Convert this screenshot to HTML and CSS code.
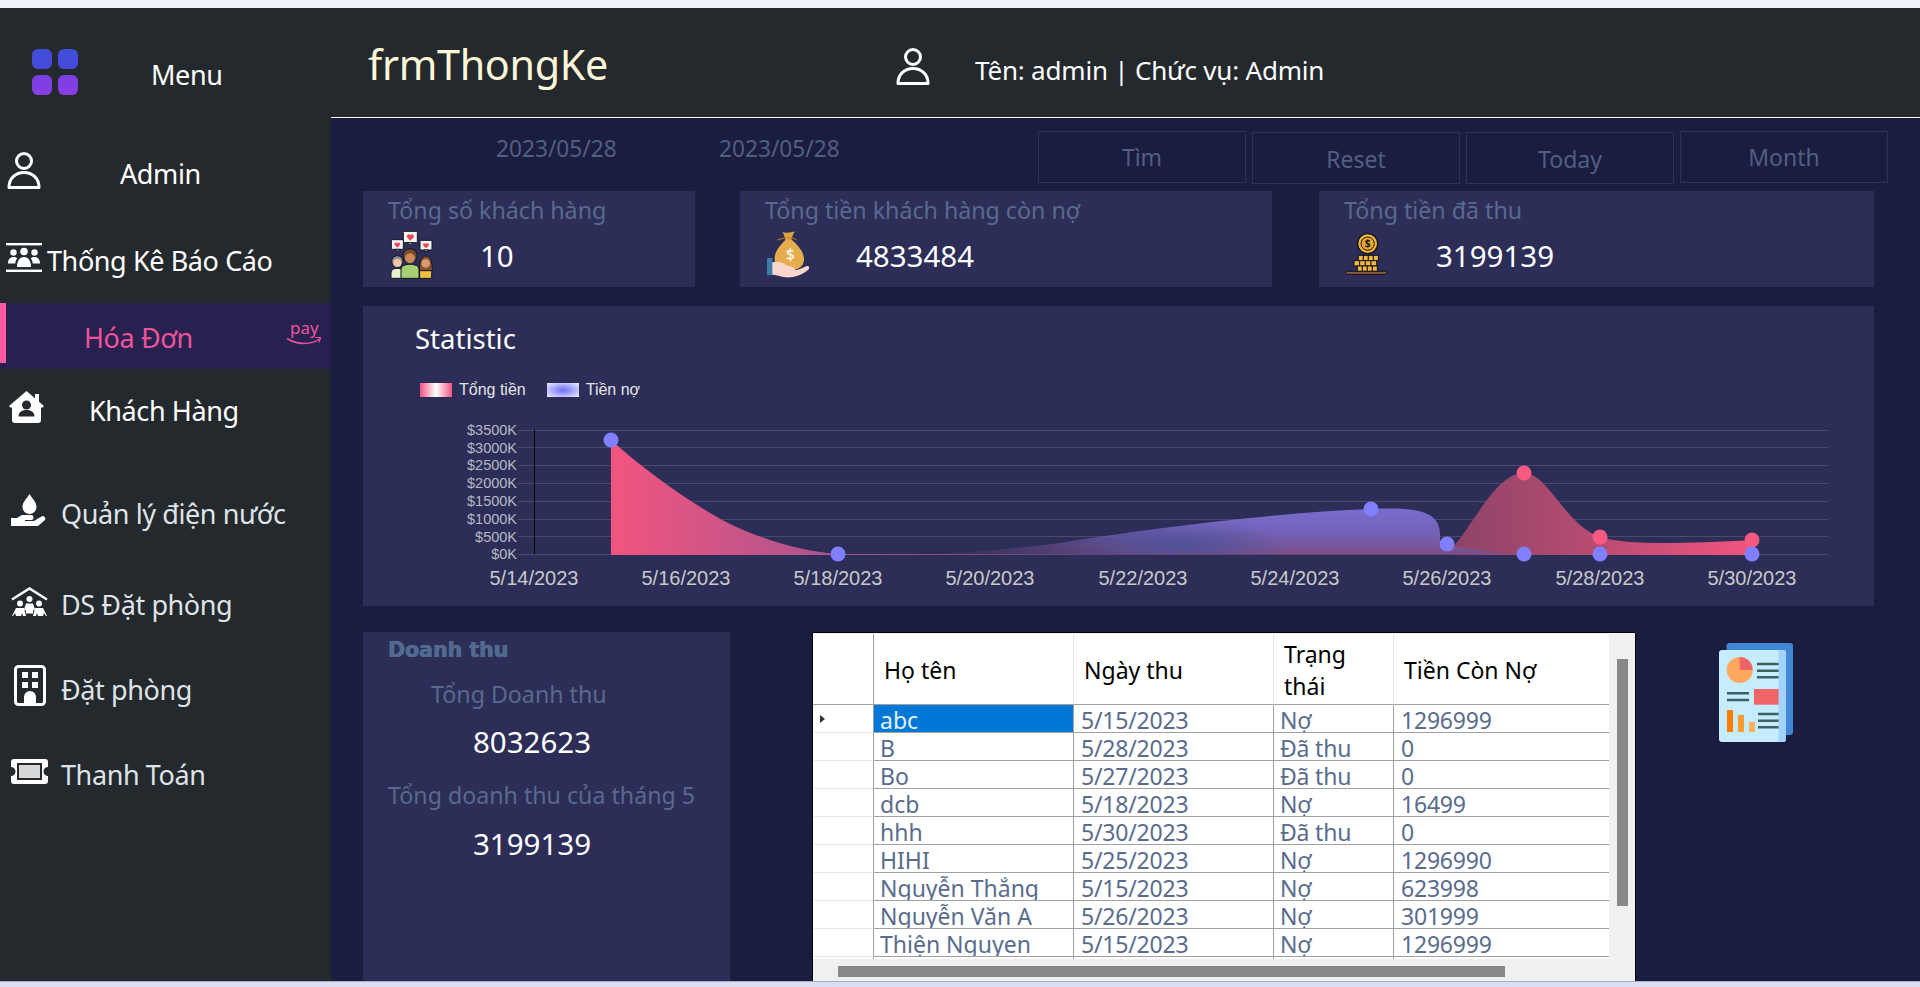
FILE: index.html
```html
<!DOCTYPE html>
<html lang="vi">
<head>
<meta charset="utf-8">
<title>frmThongKe</title>
<link rel="stylesheet" href="styles.css">
</head>
<body>
<div class="app">
  <div class="top-strip"></div>
  <div class="shell">
    <aside class="sidebar">
      <div class="side-row row-brand">
        <div class="logo"><i class="t1"></i><i class="t1"></i><i class="t2"></i><i class="t2"></i></div>
        <span class="label label-brand">Menu</span>
      </div>
      <div class="side-row row-admin">
        <svg class="ico-user" viewBox="0 0 34 37"><circle cx="17" cy="9" r="7.5" fill="none" stroke="#fff" stroke-width="3"/><path d="M2 35.5C2 26 9 20.5 17 20.5S32 26 32 35.5Z" fill="none" stroke="#fff" stroke-width="3" stroke-linejoin="round"/></svg>
        <span class="label label-admin">Admin</span>
      </div>
      <div class="side-row row-report">
        <svg class="ico-report" viewBox="0 0 36 29" fill="#fff"><rect width="36" height="2.400"/><rect y="26.600" width="36" height="2.400"/><circle cx="18" cy="8.500" r="3.800"/><circle cx="7.500" cy="9.500" r="3.200"/><circle cx="28.500" cy="9.500" r="3.200"/><path d="M2 20.500c0-4 2-6.500 5.500-6.500 1.800 0 2.800.5 3.700 1.400-1.400 1.500-1.900 3.200-1.900 5.100Z"/><path d="M34 20.500c0-4-2-6.500-5.500-6.500-1.800 0-2.800.5-3.700 1.400 1.400 1.500 1.900 3.200 1.900 5.100Z"/><path d="M11 24c0-6 2.500-10 7-10s7 4 7 10Z"/></svg>
        <span class="label label-report">Thống Kê Báo Cáo</span>
      </div>
      <div class="side-row row-active">
        <span class="active-bar"></span>
        <span class="label label-active">Hóa Đơn</span>
        <svg class="ico-pay" viewBox="0 0 34 24"><text x="3" y="12" class="pay-text">pay</text><path d="M0 16.500C10 23 24 23 32.500 17" fill="none" stroke="#f0529c" stroke-width="1.500"/><path d="M28 15.500l5.500 0-1.500 5" fill="none" stroke="#f0529c" stroke-width="1.200"/></svg>
      </div>
      <div class="side-row row-customer">
        <svg class="ico-house" viewBox="0 0 35 32"><path fill="#fff" d="M17.500 0L26 7.300V3h4v7.800L35 15l-2 2-1-.9V29a3 3 0 0 1-3 3H6a3 3 0 0 1-3-3V16l-1 1-2-2Z"/><circle cx="17.500" cy="14" r="4.500" fill="#24292d"/><path fill="#24292d" d="M9.500 25.500c0-4 3-6.500 8-6.500s8 2.500 8 6.500Z"/></svg>
        <span class="label label-customer">Khách Hàng</span>
      </div>
      <div class="side-row row-water">
        <svg class="ico-wide" viewBox="0 0 37 32" fill="#fff"><path d="M18.500 0c3 5 7 8 7 13a7 7 0 0 1-14 0c0-5 4-8 7-13Z"/><path d="M0 24h6l5-3h9a2.500 2.500 0 0 1 0 5h-6v1h9l7.500-4.500a2.600 2.600 0 0 1 3.500 3.600L27 32H0Z"/></svg>
        <span class="label label-sub">Quản lý điện nước</span>
      </div>
      <div class="side-row row-booklist">
        <svg class="ico-wide" viewBox="0 0 37 29" fill="#fff"><path d="M1 12.500L18.500 1.500 36 12.500" fill="none" stroke="#fff" stroke-width="2.500"/><circle cx="18.500" cy="12" r="3"/><circle cx="9" cy="16.500" r="3"/><circle cx="28" cy="16.500" r="3"/><path d="M15 16.500h7l2 6-2 1v3h-7v-3l-2-1Z"/><path d="M5 21h8l2 8h-3l-1-3-1 3H5l-1-3-2 3H1Z"/><path d="M24 21h8l4 8h-1l-2-3-1 3h-5l-1-3-1 3h-3Z"/></svg>
        <span class="label label-sub">DS Đặt phòng</span>
      </div>
      <div class="side-row row-booking">
        <svg class="ico-building" viewBox="0 0 32 41"><rect x="1.500" y="1.500" width="29" height="38" rx="3" fill="none" stroke="#fff" stroke-width="3"/><g fill="#fff"><rect x="8" y="7" width="6" height="6"/><rect x="18" y="7" width="6" height="6"/><rect x="8" y="17" width="6" height="6"/><rect x="18" y="17" width="6" height="6"/><path d="M10 39V32a6 6 0 0 1 12 0v7Z"/></g></svg>
        <span class="label label-sub label-building">Đặt phòng</span>
      </div>
      <div class="side-row row-pay">
        <svg class="ico-wide ico-ticket" viewBox="0 0 37 25"><path fill="#fff" d="M3 0H34a3 3 0 0 1 3 3V8a4.500 4.500 0 0 0 0 9V22a3 3 0 0 1-3 3H3a3 3 0 0 1-3-3V17a4.500 4.500 0 0 0 0-9V3a3 3 0 0 1 3-3Z"/><rect x="7" y="5" width="23" height="15" fill="#d8d8d8" stroke="#24292d" stroke-width="2"/></svg>
        <span class="label label-sub label-pay">Thanh Toán</span>
      </div>
    </aside>

    <main class="main">
      <header class="header">
        <h1 class="title">frmThongKe</h1>
        <svg class="ico-user ico-user-head" viewBox="0 0 34 37"><circle cx="17" cy="9" r="7.500" fill="none" stroke="#fff" stroke-width="3"/><path d="M2 35.500C2 26 9 20.500 17 20.500S32 26 32 35.500Z" fill="none" stroke="#fff" stroke-width="3" stroke-linejoin="round"/></svg>
        <div class="who">Tên: admin | Chức vụ: Admin</div>
      </header>

      <section class="toolbar">
        <div class="date date-a">2023/05/28</div>
        <div class="date date-b">2023/05/28</div>
        <div class="buttons">
          <div class="btn">Tìm</div>
          <div class="btn btn-low">Reset</div>
          <div class="btn btn-low">Today</div>
          <div class="btn">Month</div>
        </div>
      </section>

      <section class="stats">
        <div class="card card-a">
          <div class="card-title">Tổng số khách hàng</div>
          <div class="card-body">
            <svg class="stat-ico" viewBox="0 0 165 165">
              <g stroke="#15151f" stroke-width="3">
                <rect x="55" y="10" width="42" height="34" rx="3" fill="#f4f4f4"/><path d="M69 44l7 7 7-7Z" fill="#f4f4f4"/>
                <rect x="19" y="35" width="36" height="29" rx="3" fill="#f4f4f4"/><path d="M31 64l6 6 6-6Z" fill="#f4f4f4"/>
                <rect x="105" y="37" width="36" height="29" rx="3" fill="#f4f4f4"/><path d="M117 66l6 6 6-6Z" fill="#f4f4f4"/>
                <path d="M18 151v-16c0-10 9-14 19-14s18 4 18 14v16Z" fill="#e6efd2"/>
                <path d="M104 151v-18c0-8 8-12 18-12s18 4 18 12v18Z" fill="#efbe3c"/>
                <path d="M48 151v-26c0-12 13-16 27-16s27 4 27 16v26Z" fill="#a7cf73"/>
                <circle cx="37" cy="100" r="17" fill="#8f8f8f"/><circle cx="37" cy="105" r="12" fill="#f2c9a8" stroke="none"/>
                <path d="M103 128c0-30 8-44 20-44s19 14 19 44Z" fill="#8a5030"/><circle cx="122" cy="106" r="13" fill="#d49a70" stroke="none"/>
                <circle cx="75" cy="83" r="21" fill="#7a4a2a"/><circle cx="75" cy="91" r="15" fill="#c98a5a" stroke="none"/>
              </g>
              <g fill="#e8445a"><path d="M76 38l-10-10a5.500 5.500 0 0 1 10-6 5.500 5.500 0 0 1 10 6Z"/><path d="M37 59l-8-8a4 4 0 0 1 8-5 4 4 0 0 1 8 5Z"/><path d="M123 61l-8-8a4 4 0 0 1 8-5 4 4 0 0 1 8 5Z"/></g>
            </svg>
            <div class="value value-a">10</div>
          </div>
        </div>
        <div class="card card-b">
          <div class="card-title">Tổng tiền khách hàng còn nợ</div>
          <div class="card-body">
            <svg class="stat-ico" viewBox="0 0 165 165">
              <path d="M62 12c8 4 28 2 36-2l-8 18 -2 10h-18l-2-10Z" fill="#dfa23f"/>
              <path d="M70 36h20c18 16 36 36 36 58 0 24-22 34-46 34s-42-10-42-36c0-22 16-40 32-56Z" fill="#e6ad4e"/>
              <path d="M68 30h24M88 28l16 8M66 30l-20 6" stroke="#b97f24" stroke-width="3" fill="none"/>
              <text x="85" y="96" class="bag-dollar">$</text>
              <path d="M30 103c14-4 30 0 42 8l20 6c10 3 8 14-2 12l-8-1c18 2 36-6 52-14 8-2 10 6 4 12-20 16-44 24-68 22-14-2-28-8-40-8Z" fill="#fad6cd"/>
              <rect x="15" y="90" width="16" height="52" rx="2" fill="#3a7ca5"/>
            </svg>
            <div class="value value-b">4833484</div>
          </div>
        </div>
        <div class="card card-c">
          <div class="card-title">Tổng tiền đã thu</div>
          <div class="card-body">
            <svg class="stat-ico" viewBox="0 0 165 165">
              <g fill="#f5b83d" stroke="#15151f" stroke-width="3">
                <circle cx="83" cy="47" r="30" stroke-width="4"/><circle cx="83" cy="47" r="20" fill="#e9a62a"/>
                <rect x="55" y="82" width="15" height="16"/><rect x="70" y="82" width="15" height="16"/><rect x="85" y="82" width="15" height="16"/><rect x="100" y="82" width="15" height="16"/>
                <rect x="42" y="98" width="17" height="16"/><rect x="59" y="98" width="17" height="16"/><rect x="76" y="98" width="17" height="16"/><rect x="93" y="98" width="17" height="16"/>
                <rect x="52" y="114" width="15" height="16"/><rect x="67" y="114" width="15" height="16"/><rect x="82" y="114" width="15" height="16"/><rect x="97" y="114" width="15" height="16"/>
              </g>
              <text x="83" y="57" class="coin-dollar">$</text>
              <rect x="18" y="130" width="122" height="9" rx="2" fill="#8a5a44" stroke="#15151f" stroke-width="3"/>
            </svg>
            <div class="value value-c">3199139</div>
          </div>
        </div>
      </section>

      <section class="chart-card">
        <div class="chart-title">Statistic</div>
        <div class="legend">
          <span class="swatch swatch-total"></span><span class="legend-text">Tổng tiền</span>
          <span class="swatch swatch-debt"></span><span class="legend-text">Tiền nợ</span>
        </div>
        <svg class="chart" viewBox="363 420 1511 186">
          <defs>
            <linearGradient id="gPink" gradientUnits="userSpaceOnUse" x1="611" y1="0" x2="1752" y2="0">
              <stop offset="0" stop-color="#f2557f"/>
              <stop offset=".2" stop-color="#a8558f"/>
              <stop offset=".45" stop-color="#62407e"/>
              <stop offset=".74" stop-color="#8f4468"/>
              <stop offset=".84" stop-color="#b04a70"/>
              <stop offset="1" stop-color="#f2557f"/>
            </linearGradient>
            <linearGradient id="gBlue" gradientUnits="userSpaceOnUse" x1="0" y1="505" x2="0" y2="554">
              <stop offset="0" stop-color="#7a6ed4"/>
              <stop offset=".55" stop-color="#7462b8"/>
              <stop offset="1" stop-color="#7a4f88"/>
            </linearGradient>
            <linearGradient id="gFade" gradientUnits="userSpaceOnUse" x1="925" y1="0" x2="1180" y2="0">
              <stop offset="0" stop-color="#000"/>
              <stop offset="1" stop-color="#fff"/>
            </linearGradient>
            <radialGradient id="gDeep" gradientUnits="userSpaceOnUse" cx="0" cy="0" r="1" gradientTransform="translate(1180 545) scale(110 26)">
              <stop offset="0" stop-color="#4a5098" stop-opacity=".9"/>
              <stop offset="1" stop-color="#4a5098" stop-opacity="0"/>
            </radialGradient>
            <mask id="humpFade" maskUnits="userSpaceOnUse" x="900" y="490" width="650" height="70">
              <rect x="900" y="490" width="650" height="70" fill="url(#gFade)"/>
            </mask>
            <clipPath id="humpClip">
              <path d="M925 554C980 552 1020 548 1060 543C1140 530 1280 512 1371 509C1420 507 1440 512 1440 535V545C1475 549 1500 554 1524 554Z"/>
            </clipPath>
          </defs>
          <g class="grid-lines">
            <line x1="518" x2="1828" y1="430.500" y2="430.500"/><line x1="518" x2="1828" y1="447.500" y2="447.500"/>
            <line x1="518" x2="1828" y1="465.500" y2="465.500"/><line x1="518" x2="1828" y1="483.500" y2="483.500"/>
            <line x1="518" x2="1828" y1="501.500" y2="501.500"/><line x1="518" x2="1828" y1="519.500" y2="519.500"/>
            <line x1="518" x2="1828" y1="536.500" y2="536.500"/><line x1="518" x2="1828" y1="554.500" y2="554.500"/>
          </g>
          <line x1="534.500" x2="534.500" y1="430" y2="554" stroke="#000"/>
          <g class="y-labels">
            <text x="517" y="435">$3500K</text><text x="517" y="453">$3000K</text>
            <text x="517" y="470">$2500K</text><text x="517" y="488">$2000K</text>
            <text x="517" y="506">$1500K</text><text x="517" y="524">$1000K</text>
            <text x="517" y="542">$500K</text><text x="517" y="559">$0K</text>
          </g>
          <path fill="url(#gPink)" d="M611 554V440C640 466 680 496 717 517C750 536 800 552 838 554L1452 554.500V548C1472 528 1495 473 1524 473C1548 473 1565 525 1600 537C1625 545 1680 544 1752 540V555H611Z"/>
          <path fill="url(#gBlue)" mask="url(#humpFade)" d="M925 554C980 552 1020 548 1060 543C1140 530 1280 512 1371 509C1420 507 1440 512 1440 535V545C1475 549 1500 554 1524 554Z"/>
          <rect x="1040" y="500" width="300" height="56" fill="url(#gDeep)" clip-path="url(#humpClip)"/>
          <g fill="#f65a80"><circle cx="1524" cy="473" r="7.500"/><circle cx="1600" cy="537" r="7.500"/><circle cx="1752" cy="540" r="7.500"/></g>
          <g fill="#8080ff"><circle cx="611" cy="440" r="7.500"/><circle cx="838" cy="554" r="7.500"/><circle cx="1371" cy="509" r="7.500"/><circle cx="1447" cy="544" r="7.500"/><circle cx="1524" cy="554" r="7.500"/><circle cx="1600" cy="554" r="7.500"/><circle cx="1752" cy="554" r="7.500"/></g>
          <g class="x-labels">
            <text x="534" y="585">5/14/2023</text><text x="686" y="585">5/16/2023</text><text x="838" y="585">5/18/2023</text>
            <text x="990" y="585">5/20/2023</text><text x="1143" y="585">5/22/2023</text><text x="1295" y="585">5/24/2023</text>
            <text x="1447" y="585">5/26/2023</text><text x="1600" y="585">5/28/2023</text><text x="1752" y="585">5/30/2023</text>
          </g>
        </svg>
      </section>

      <section class="lower">
        <div class="revenue">
          <div class="rev-title">Doanh thu</div>
          <div class="rev-label rev-label-a">Tổng Doanh thu</div>
          <div class="rev-value rev-value-a">8032623</div>
          <div class="rev-label rev-label-b">Tổng doanh thu của tháng 5</div>
          <div class="rev-value rev-value-b">3199139</div>
        </div>

        <div class="grid-box">
          <div class="grid">
            <div class="g-row g-head">
              <div class="g-rowhead"></div>
              <div class="g-th">Họ tên</div>
              <div class="g-th">Ngày thu</div>
              <div class="g-th g-wrap">Trạng thái</div>
              <div class="g-th g-last">Tiền Còn Nợ</div>
            </div>
            <div class="g-row"><div class="g-rowhead"><span class="caret"></span></div><div class="g-td g-name g-selected">abc</div><div class="g-td">5/15/2023</div><div class="g-td g-state">Nợ</div><div class="g-td g-last">1296999</div></div>
            <div class="g-row"><div class="g-rowhead"></div><div class="g-td g-name">B</div><div class="g-td">5/28/2023</div><div class="g-td g-state">Đã thu</div><div class="g-td g-last">0</div></div>
            <div class="g-row"><div class="g-rowhead"></div><div class="g-td g-name">Bo</div><div class="g-td">5/27/2023</div><div class="g-td g-state">Đã thu</div><div class="g-td g-last">0</div></div>
            <div class="g-row"><div class="g-rowhead"></div><div class="g-td g-name">dcb</div><div class="g-td">5/18/2023</div><div class="g-td g-state">Nợ</div><div class="g-td g-last">16499</div></div>
            <div class="g-row"><div class="g-rowhead"></div><div class="g-td g-name">hhh</div><div class="g-td">5/30/2023</div><div class="g-td g-state">Đã thu</div><div class="g-td g-last">0</div></div>
            <div class="g-row"><div class="g-rowhead"></div><div class="g-td g-name">HIHI</div><div class="g-td">5/25/2023</div><div class="g-td g-state">Nợ</div><div class="g-td g-last">1296990</div></div>
            <div class="g-row"><div class="g-rowhead"></div><div class="g-td g-name">Nguyễn Thắng</div><div class="g-td">5/15/2023</div><div class="g-td g-state">Nợ</div><div class="g-td g-last">623998</div></div>
            <div class="g-row"><div class="g-rowhead"></div><div class="g-td g-name">Nguyễn Văn A</div><div class="g-td">5/26/2023</div><div class="g-td g-state">Nợ</div><div class="g-td g-last">301999</div></div>
            <div class="g-row"><div class="g-rowhead"></div><div class="g-td g-name">Thiện Nguyen</div><div class="g-td">5/15/2023</div><div class="g-td g-state">Nợ</div><div class="g-td g-last">1296999</div></div>
            <div class="g-row"><div class="g-rowhead"></div><div class="g-td"></div><div class="g-td"></div><div class="g-td"></div><div class="g-td g-last"></div></div>
          </div>
          <div class="v-track"><div class="v-thumb"></div></div>
          <div class="h-track"><div class="h-thumb"></div></div>
          <div class="corner"></div>
        </div>

        <svg class="doc-ico" viewBox="1719 643 74 99">
          <rect x="1726.500" y="643" width="66.500" height="92" rx="3" fill="#4187d8"/>
          <rect x="1719" y="650" width="67" height="92" rx="3" fill="#c6ecff"/>
          <path d="M1778.500 650h4.500a3 3 0 0 1 3 3v86a3 3 0 0 1-3 3h-4.500Z" fill="#a5d2fb"/>
          <circle cx="1739.700" cy="670" r="13" fill="#ffa85e"/>
          <path d="M1739.700 670v-13a13 13 0 0 1 13 13Z" fill="#ef6464"/>
          <g stroke="#3d5f60" stroke-width="2.500">
            <path d="M1757 664h21.600M1757 670.700h21.600M1757 677.300h21.600M1727 693.300h22M1727 700h22M1758 714h20.600M1758 720.700h20.600M1758 727.300h20.600"/>
          </g>
          <rect x="1754" y="689" width="24.600" height="15.700" fill="#ef6464"/>
          <rect x="1727" y="710" width="6" height="22" fill="#ff7b00"/>
          <rect x="1738" y="715" width="6" height="17" fill="#ff9a30"/>
          <rect x="1749" y="722" width="6" height="10" fill="#ffb060"/>
        </svg>
      </section>
    </main>
  </div>
  <div class="bottom-strip"></div>
</div>
</body>
</html>
```

FILE: styles.css
```css
* { box-sizing: border-box; }
html, body { margin: 0; padding: 0; height: 100%; overflow: hidden; background: #1a1c40; }
body { font-family: "Noto Sans", "Open Sans", sans-serif; }

.app { width: 1920px; height: 987px; display: flex; flex-direction: column; }
.top-strip { height: 8px; background: #eff2f8; flex: none; }
.bottom-strip { height: 6px; background: #dcdef3; border-top: 1px solid #a9abc0; flex: none; }
.shell { flex: 1; display: flex; min-height: 0; }

/* Sidebar */
.sidebar { width: 331px; flex: none; background: #24292d; display: flex; flex-direction: column; }
.side-row { display: flex; align-items: center; flex: none; }
.label { color: #fff; font-size: 27px; letter-spacing: -.4px; padding-top: 8px; white-space: nowrap; line-height: 44px; }
.label-sub { color: #dfe3e8; margin-left: 13px; }

.row-brand { height: 128px; padding-left: 32px; }
.logo { display: grid; grid-template-columns: 20px 20px; grid-template-rows: 20px 20px; gap: 6px; }
.logo i { display: block; border-radius: 6px; }
.logo .t1 { background: linear-gradient(#3f4fd8, #4a48dc); }
.logo .t2 { background: linear-gradient(#7a3fe0, #8a3eea); }
.label-brand { margin-left: 73px; padding-top: 5px; }

.row-admin { height: 68px; padding-left: 7px; }
.ico-user { width: 34px; height: 37px; flex: none; }
.label-admin { margin-left: 79px; }

.row-report { height: 79px; margin-top: 14px; padding-left: 6px; }
.ico-report { width: 36px; height: 29px; flex: none; }
.label-report { margin-left: 5px; padding-top: 7px; }

.row-active { height: 66px; margin-top: 6px; background: #27214f; }
.active-bar { width: 6px; height: 60px; background: #ff5aa2; align-self: flex-start; flex: none; }
.label-active { color: #f0529c; margin-left: 78px; padding-top: 3px; }
.ico-pay { width: 34px; height: 24px; margin-left: auto; margin-right: 10px; margin-top: -4px; flex: none; }
.pay-text { font-family: "Noto Sans", sans-serif; font-size: 17px; fill: #f0529c; }

.row-customer { height: 76px; padding-left: 9px; }
.ico-house { width: 35px; height: 32px; flex: none; }
.label-customer { margin-left: 45px; }

.row-water { height: 130px; padding-left: 11px; }
.row-booklist { height: 53px; padding-left: 11px; }
.row-booking { height: 115px; padding-left: 14px; }
.row-pay { height: 57px; padding-left: 11px; }
.ico-wide { width: 37px; flex: none; }
.row-water .ico-wide { height: 32px; }
.row-booklist .ico-wide { height: 29px; }
.row-booklist .label { padding-top: 7px; }
.ico-ticket { height: 25px; }
.ico-building { width: 32px; height: 41px; flex: none; }
.label-building { margin-left: 15px; }
.label-pay { padding-top: 6px; }

/* Main */
.main { flex: 1; min-width: 0; background: #1a1c40; display: flex; flex-direction: column; }
.header { height: 110px; flex: none; background: #24292d; border-bottom: 1px solid #fff; display: flex; align-items: center; padding-left: 37px; }
.title { margin: 0; width: 528px; font-size: 41.300px; font-weight: 400; line-height: 56px; padding-top: 2px; color: #fdf6d8; letter-spacing: -.3px; flex: none; }
.ico-user-head { margin-top: 7px; }
.who { margin-left: 45px; font-size: 26px; line-height: 34px; color: #fff; padding-top: 14px; letter-spacing: -.2px; white-space: nowrap; }

.toolbar { display: flex; height: 53px; margin-top: 13px; flex: none; padding-left: 165px; }
.date { font-size: 22.700px; line-height: 36px; color: #515f82; flex: none; }
.date-a { width: 223px; }
.date-b { width: 319px; }
.buttons { display: flex; gap: 6px; }
.btn { width: 208px; height: 52px; border: 1px solid #2c3358; color: #515f82; font-size: 23px; display: flex; align-items: center; justify-content: center; }
.btn-low { margin-top: 1px; padding-top: 2px; }

.stats { display: flex; margin-top: 7px; padding-left: 32px; flex: none; }
.card { height: 96px; background: #2c2e57; flex: none; padding-left: 22px; }
.card-a { width: 332px; }
.card-b { width: 532px; margin-left: 45px; }
.card-c { width: 555px; margin-left: 47px; padding-left: 21px; }
.card-title { font-size: 23.200px; line-height: 38px; height: 37px; color: #5a698e; padding-left: 3px; white-space: nowrap; }
.card-c .card-title { padding-left: 4px; }
.card-body { display: flex; align-items: center; height: 55px; }
.stat-ico { width: 55px; height: 55px; flex: none; }
.value { font-size: 29.500px; line-height: 40px; color: #fff; }
.value-a { margin-left: 40px; }
.value-b { margin-left: 39px; }
.value-c { margin-left: 41px; }
.bag-dollar { font-family: "Noto Sans", sans-serif; font-size: 48px; fill: #fff; text-anchor: middle; }
.coin-dollar { font-family: "Noto Sans", sans-serif; font-size: 30px; font-weight: 700; fill: #15151f; text-anchor: middle; }

.chart-card { height: 300px; margin: 19px 46px 0 32px; background: #2c2e57; padding: 13px 0 0 52px; flex: none; }
.chart-title { font-size: 27.500px; line-height: 40px; color: #fff; }
.legend { display: flex; align-items: center; height: 20px; margin: 21px 0 0 5px; font-family: "Liberation Sans", Arial, sans-serif; font-size: 16px; color: #e4e4e8; }
.swatch { width: 32px; height: 14px; flex: none; }
.swatch-total { background: linear-gradient(90deg, #f2557f, #fff 50%, #f2557f); }
.swatch-debt { background: radial-gradient(ellipse at center, #7a7af5 10%, #e8e8ff 95%); }
.legend-text { margin: 0 21px 0 7px; white-space: nowrap; }
.chart { display: block; width: 1511px; height: 186px; margin: 20px 0 0 -52px; }
.grid-lines line { stroke: #4a4b6b; stroke-width: 1; }
.y-labels text { font-family: "Liberation Sans", Arial, sans-serif; font-size: 14.500px; fill: #b6b8c4; text-anchor: end; }
.x-labels text { font-family: "Liberation Sans", Arial, sans-serif; font-size: 20px; fill: #c8c8c8; text-anchor: middle; }

.lower { display: flex; flex: 1; min-height: 0; margin-top: 26px; padding-left: 32px; }
.revenue { width: 367px; flex: none; background: #2c2e57; padding-left: 25px; }
.rev-title { font-family: "DejaVu Sans", sans-serif; font-weight: 700; font-size: 20.500px; line-height: 36px; color: #516a90; text-shadow: .5px 0 0 #516a90, -.3px 0 0 #516a90; }
.rev-label { font-size: 23.200px; line-height: 36px; color: #5a698e; white-space: nowrap; }
.rev-value { font-size: 29.500px; line-height: 44px; color: #fff; margin-left: 85px; }
.rev-label-a { margin: 8px 0 0 43px; }
.rev-value-a { margin-top: 8px; }
.rev-label-b { margin-top: 13px; }
.rev-value-b { margin-top: 9px; }

/* Data grid */
.grid-box { width: 824px; height: 349px; margin-left: 82px; flex: none; background: #f0f0f0; border: 1px solid #000; border-width: 1px 1px 0 1px; display: grid; grid-template-columns: 796px 1fr; grid-template-rows: 325px 1fr; }
.grid { background: #fff; overflow: hidden; margin-top: 1px; height: 325px; }
.g-row { display: grid; grid-template-columns: 61px 200px 200px 120px 215px; height: 28px; }
.g-head { height: 71px; }
.g-rowhead { border-right: 1px solid #a0a0a0; border-bottom: 1px solid #e6e6e6; display: flex; align-items: center; padding-left: 7px; }
.g-head .g-rowhead { border-bottom-color: #a0a0a0; }
.caret { width: 0; height: 0; border-left: 5px solid #333; border-top: 4.500px solid transparent; border-bottom: 4.500px solid transparent; }
.g-th { border-right: 1px solid #e6e6e6; border-bottom: 1px solid #a0a0a0; padding: 2px 0 0 10px; color: #000; font-size: 23px; line-height: 32px; display: flex; align-items: center; }
.g-wrap { padding-right: 30px; }
.g-td { border-right: 1px solid #a0a0a0; border-bottom: 1px solid #a0a0a0; padding: 1px 0 0 7px; color: #5a6c8c; font-size: 23px; line-height: 28px; overflow: hidden; white-space: nowrap; letter-spacing: -.2px; }
.g-name { padding-left: 6px; letter-spacing: 0; }
.g-state { padding-left: 6px; }
.g-last { border-right: 0; }
.g-selected { background: #0078d7; color: #e6eef8; }
.v-track { padding: 26px 0 0 8px; }
.v-thumb { width: 11px; height: 247px; background: #888; }
.h-track { padding: 8px 0 0 25px; }
.h-thumb { width: 667px; height: 11px; background: #888; }
.corner { background: #f0f0f0; }

.doc-ico { width: 74px; height: 99px; margin: 11px 0 0 83px; flex: none; }
```
